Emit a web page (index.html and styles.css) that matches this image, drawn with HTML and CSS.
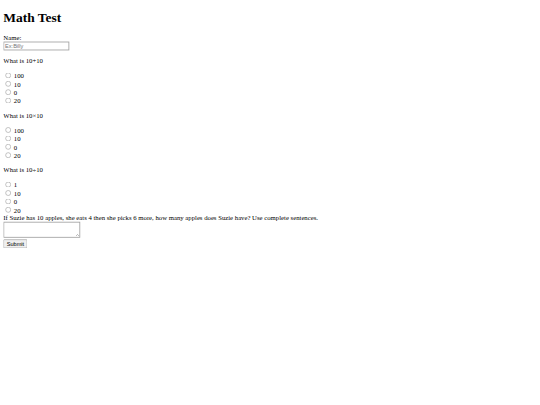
FILE: index.html
```html
<!DOCTYPE html>
<html>
<head>
<meta charset="utf-8">
<title>Math Test</title>
<link rel="stylesheet" href="styles.css">
</head>
<body>
<h1 class="title">Math Test</h1>
<form>
<label for="name">Name:</label><br>
<input type="text" id="name" class="field" placeholder="Ex:Billy"><br>
<p>What is 10+10</p>
<input type="radio" name="q1"> 100<br>
<input type="radio" name="q1"> 10<br>
<input type="radio" name="q1"> 0<br>
<input type="radio" name="q1"> 20<br>
<p>What is 10×10</p>
<input type="radio" name="q2"> 100<br>
<input type="radio" name="q2"> 10<br>
<input type="radio" name="q2"> 0<br>
<input type="radio" name="q2"> 20<br>
<p>What is 10÷10</p>
<input type="radio" name="q3"> 1<br>
<input type="radio" name="q3"> 10<br>
<input type="radio" name="q3"> 0<br>
<input type="radio" name="q3"> 20<br>
If Suzie has 10 apples, she eats 4 then she picks 6 more, how many apples does Suzie have? Use complete sentences.<br>
<textarea class="answer"></textarea><br>
<input type="submit" class="submit" value="Submit">
</form>
</body>
</html>
```

FILE: styles.css
```css
html {
  transform: scale(0.42);
  transform-origin: 0 0;
  width: 1286px;
  height: 964px;
  overflow: hidden;
}
body {
  font-family: "Liberation Serif", serif;
  color: #000;
}
.title {
  margin-top: 15px;
}
.field {
  width: 149px;
  font-family: "Liberation Sans", Arial, sans-serif;
  border: 2px solid #a0a0a0;
}
.submit {
  font-family: "Liberation Sans", Arial, sans-serif;
}
.answer {
  font-family: "Liberation Mono", monospace;
  border: 2px solid #a0a0a0;
}
```
